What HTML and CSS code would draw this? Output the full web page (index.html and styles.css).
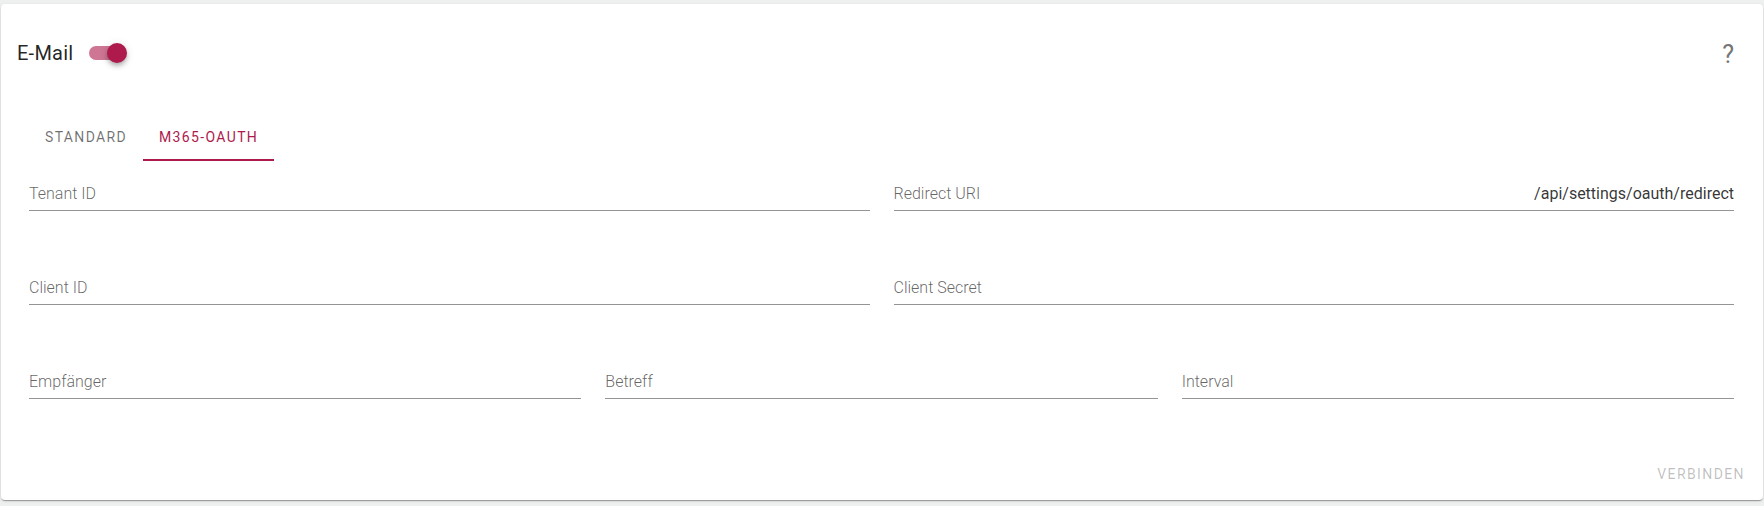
FILE: index.html
```html
<!DOCTYPE html>
<html lang="de">
<head>
<meta charset="utf-8">
<title>E-Mail Einstellungen</title>
<link rel="stylesheet" href="styles.css">
</head>
<body>
<div class="card">
  <div class="header">
    <div class="title">E-Mail</div>
    <div class="switch">
      <div class="track"></div>
      <div class="thumb"></div>
    </div>
    <div class="spacer"></div>
    <div class="help">?</div>
  </div>
  <div class="tabs">
    <div class="tab">Standard</div>
    <div class="tab active">M365-OAuth</div>
  </div>
  <div class="form">
    <div class="row two">
      <div class="field"><span class="label">Tenant ID</span></div>
      <div class="field"><span class="label">Redirect URI</span><span class="value">/api/settings/oauth/redirect</span></div>
    </div>
    <div class="row two">
      <div class="field"><span class="label">Client ID</span></div>
      <div class="field"><span class="label">Client Secret</span></div>
    </div>
    <div class="row three">
      <div class="field"><span class="label">Empfänger</span></div>
      <div class="field"><span class="label">Betreff</span></div>
      <div class="field"><span class="label">Interval</span></div>
    </div>
  </div>
  <div class="actions">
    <div class="btn">Verbinden</div>
  </div>
</div>
</body>
</html>
```
FILE: styles.css
```css
html, body {
  margin: 0;
  padding: 0;
}
body {
  background: #eef0ef;
  font-family: Roboto, "Noto Sans", Arial, sans-serif;
  width: 1764px;
  height: 506px;
  overflow: hidden;
}
.card {
  margin: 4px 1px 0 1px;
  height: 496px;
  box-sizing: border-box;
  background: #fff;
  border-radius: 4px;
  box-shadow: 0 2px 1px -1px rgba(0,0,0,0.2), 0 1px 1px 0 rgba(0,0,0,0.14), 0 1px 3px 0 rgba(0,0,0,0.12);
  display: flex;
  flex-direction: column;
}
.header {
  display: flex;
  align-items: center;
  height: 40px;
  padding: 29px 29px 0 16px;
}
.title {
  font-size: 20px;
  color: rgba(0,0,0,0.87);
  letter-spacing: 0.0125em;
}
.switch {
  position: relative;
  width: 38px;
  height: 20px;
  margin-left: 16px;
}
.track {
  position: absolute;
  left: 0;
  top: 3px;
  width: 36px;
  height: 14px;
  border-radius: 8px;
  background: #ad1a4b;
  opacity: 0.6;
}
.thumb {
  position: absolute;
  left: 18px;
  top: 0;
  width: 20px;
  height: 20px;
  border-radius: 50%;
  background: #ad1a4b;
  box-shadow: 0 2px 4px -1px rgba(0,0,0,0.2), 0 4px 5px 0 rgba(0,0,0,0.14), 0 1px 10px 0 rgba(0,0,0,0.12);
}
.spacer { flex: 1; }
.help {
  font-size: 25px;
  line-height: 40px;
  padding-top: 3px;
  color: #757575;
}
.tabs {
  display: flex;
  height: 48px;
  margin: 40px 0 0 28px;
}
.tab {
  display: flex;
  align-items: center;
  justify-content: center;
  padding: 2px 16px 0 16px;
  min-width: 90px;
  font-size: 14px;
  font-weight: 400;
  text-transform: uppercase;
  letter-spacing: 1.35px;
  color: rgba(0,0,0,0.56);
  box-sizing: border-box;
  border-bottom: 2px solid transparent;
}
.tab.active {
  color: #ad1a4b;
  border-bottom-color: #ad1a4b;
}
.form {
  display: flex;
  flex-direction: column;
  gap: 67px;
  padding: 23px 29px 0 28px;
}
.row {
  display: grid;
  column-gap: 24px;
}
.row.two { grid-template-columns: 1fr 1fr; }
.row.three { grid-template-columns: 1fr 1fr 1fr; }
.field {
  display: flex;
  justify-content: space-between;
  font-size: 16px;
  line-height: 20px;
  padding-bottom: 6px;
  border-bottom: 1px solid rgba(0,0,0,0.42);
}
.label { color: rgba(0,0,0,0.62); font-weight: 300; }
.value { color: rgba(0,0,0,0.8); }
.actions {
  margin-top: auto;
  display: flex;
  justify-content: flex-end;
  padding: 8px 8px 8px 8px;
}
.btn {
  height: 36px;
  display: flex;
  align-items: center;
  padding: 0 10px 0 16px;
  font-size: 14px;
  font-weight: 400;
  text-transform: uppercase;
  letter-spacing: 1.4px;
  color: rgba(0,0,0,0.26);
}
```
